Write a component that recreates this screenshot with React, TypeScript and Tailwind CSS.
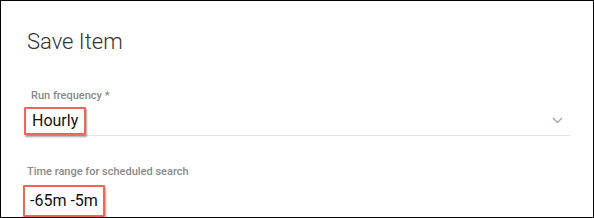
export default function App() {
  return (
    <div
      className="h-[218px] w-[594px] overflow-hidden border border-black bg-white pl-[26px] pr-[23px]"
      style={{ fontFamily: "Roboto, 'Liberation Sans', sans-serif" }}
    >
      <h1 className="pt-[28px] text-[22px] font-light leading-[26px] text-[#333]">Save Item</h1>

      <div className="mt-[34px]">
        <label className="block pl-[4px] text-[11px] font-medium leading-[13px] text-[#8a8a8a]">
          Run frequency *
        </label>
        <div className="relative mt-[4px] flex h-[30px] items-center border-b border-[#e3e3e3]">
          <span className="-ml-[3px] rounded-[1px] border-2 border-[#e9675b] px-[6px] py-[2px] text-[16px] leading-[20px] text-[#111] shadow-[1px_2px_2px_rgba(0,0,0,0.35)]">
            Hourly
          </span>
          <svg
            className="absolute right-[7px] top-[11px]"
            width="11"
            height="7"
            viewBox="0 0 11 7"
            fill="none"
            stroke="#9aa6b8"
            strokeWidth="1.3"
          >
            <path d="M1 1l4.5 4.5L10 1" />
          </svg>
        </div>
      </div>

      <div className="mt-[29px]">
        <label className="block text-[11px] font-medium leading-[13px] text-[#8a8a8a]">
          Time range for scheduled search
        </label>
        <div className="mt-[7px] flex">
          <span className="-ml-[4px] rounded-[1px] border-2 border-[#e9675b] px-[5px] py-[4px] text-[16px] leading-[20px] text-[#111] shadow-[1px_2px_2px_rgba(0,0,0,0.35)]">
            -65m -5m
          </span>
        </div>
      </div>
    </div>
  );
}
